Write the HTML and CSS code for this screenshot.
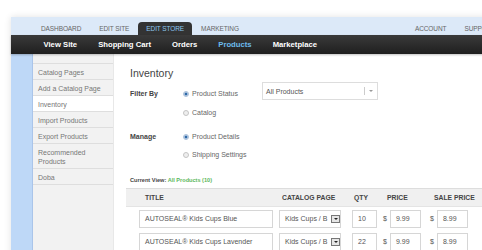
FILE: index.html
```html
<!DOCTYPE html>
<html lang="en">
<head>
  <meta charset="UTF-8">
  <title>Edit Store - Inventory</title>
  <link rel="stylesheet" href="styles.css">
</head>
<body>

  <div class="window">
    <div class="topbar">
      <a href="#" class="tab">Dashboard</a>
      <a href="#" class="tab">Edit Site</a>
      <a href="#" class="tab active">Edit Store</a>
      <a href="#" class="tab">Marketing</a>
      <div class="tab-right">
        <a href="#" class="tab">Account</a>
        <a href="#" class="tab">Support</a>
      </div>
    </div>

    <nav class="subnav">
      <a href="#">View Site</a>
      <a href="#">Shopping Cart</a>
      <a href="#">Orders</a>
      <a href="#" class="current">Products</a>
      <a href="#">Marketplace</a>
    </nav>

    <div class="main">
      <div class="strip"></div>

      <div class="sidebar">
        <div class="side-item blank"></div>
        <a href="#" class="side-item">Catalog Pages</a>
        <a href="#" class="side-item">Add a Catalog Page</a>
        <a href="#" class="side-item active">Inventory</a>
        <a href="#" class="side-item">Import Products</a>
        <a href="#" class="side-item">Export Products</a>
        <a href="#" class="side-item">Recommended Products</a>
        <a href="#" class="side-item">Doba</a>
      </div>

      <div class="content">
        <h2>Inventory</h2>

        <div class="form-row">
          <div class="label">Filter By</div>
          <div class="options">
            <div class="option"><span class="radio on"></span>Product Status</div>
            <div class="option"><span class="radio"></span>Catalog</div>
          </div>
          <div class="select">
            <span>All Products</span>
            <span class="select-arrow"></span>
          </div>
        </div>

        <div class="form-row manage">
          <div class="label">Manage</div>
          <div class="options">
            <div class="option"><span class="radio on"></span>Product Details</div>
            <div class="option"><span class="radio"></span>Shipping Settings</div>
          </div>
        </div>

        <div class="current-view">Current View: <span>All Products (10)</span></div>

        <div class="table">
          <div class="thead">
            <div class="th c-title">Title</div>
            <div class="th c-page">Catalog Page</div>
            <div class="th c-qty">Qty</div>
            <div class="th c-price">Price</div>
            <div class="th c-sale">Sale Price</div>
          </div>

          <div class="tr">
            <div class="td c-title"><div class="input title-input">AUTOSEAL® Kids Cups Blue</div></div>
            <div class="td c-page"><div class="mini-select"><span>Kids Cups / B</span><b></b></div></div>
            <div class="td c-qty"><div class="input qty-input">10</div></div>
            <div class="td c-price">$ <div class="input money-input">9.99</div></div>
            <div class="td c-sale">$ <div class="input money-input">8.99</div></div>
          </div>

          <div class="tr">
            <div class="td c-title"><div class="input title-input">AUTOSEAL® Kids Cups Lavender</div></div>
            <div class="td c-page"><div class="mini-select"><span>Kids Cups / B</span><b></b></div></div>
            <div class="td c-qty"><div class="input qty-input">22</div></div>
            <div class="td c-price">$ <div class="input money-input">9.99</div></div>
            <div class="td c-sale">$ <div class="input money-input">8.99</div></div>
          </div>
        </div>
      </div>
    </div>
  </div>

</body>
</html>
```

FILE: styles.css
```css
* {
  margin: 0;
  padding: 0;
  box-sizing: border-box;
}

body {
  background-color: #ffffff;
  font-family: "Liberation Sans", Arial, sans-serif;
  width: 482px;
  height: 250px;
  overflow: hidden;
}

a {
  text-decoration: none;
}

.window {
  margin: 17px 0 0 11px;
  width: 520px;
  height: 240px;
  box-shadow: 0 0 7px rgba(0, 0, 0, 0.12);
  display: flex;
  flex-direction: column;
}

/* top tabs */
.topbar {
  background-color: #dce9f8;
  height: 18px;
  display: flex;
  align-items: flex-end;
  padding-left: 21px;
  padding-right: 27px;
}

.tab {
  font-size: 6.5px;
  color: #666;
  text-transform: uppercase;
  padding: 0 9px;
  height: 13px;
  line-height: 13px;
  letter-spacing: -0.1px;
}

.tab.active {
  background-color: #333;
  color: #8cc6ee;
  border-radius: 4px 4px 0 0;
  padding: 0 8px;
}

.tab-right {
  margin-left: auto;
  display: flex;
}

/* dark nav */
.subnav {
  background: linear-gradient(#3a3a3a, #1f1f1f);
  height: 19px;
  display: flex;
  align-items: center;
  padding-left: 22px;
  box-shadow: 0 1px 2px rgba(0, 0, 0, 0.25);
  position: relative;
}

.subnav a {
  color: #fff;
  font-weight: bold;
  font-size: 7.7px;
  padding: 0 10.5px;
}

.subnav a.current {
  color: #6cbbec;
}

.main {
  flex: 1;
  display: flex;
}

.strip {
  width: 22px;
  background-color: #bed8f7;
  border-right: 1px solid #aac5ea;
}

/* sidebar */
.sidebar {
  width: 80px;
  background-color: #f2f2f2;
  display: flex;
  flex-direction: column;
}

.side-item {
  display: block;
  font-size: 7px;
  color: #777;
  padding: 4px 4px 2px 5px;
  min-height: 15px;
  line-height: 9px;
  border-bottom: 1px solid #dedede;
}

.side-item.blank {
  min-height: 10px;
  padding: 0;
}

.side-item.active {
  background-color: #fff;
  margin-right: -1px;
}

/* content */
.content {
  flex: 1;
  background-color: #fff;
  padding: 13px 0 0 14px;
  border-left: 1px solid #e8e8e8;
}

.content h2 {
  font-size: 10.5px;
  font-weight: normal;
  color: #444;
  margin-left: 2px;
  height: 16px;
}

.form-row {
  display: flex;
  margin-left: 2px;
  margin-top: 5px;
}

.form-row.manage {
  margin-top: 12px;
}

.label {
  width: 53px;
  font-size: 7px;
  font-weight: bold;
  color: #444;
  line-height: 12px;
}

.options {
  display: flex;
  flex-direction: column;
  gap: 6.5px;
  width: 79px;
}

.option {
  font-size: 7px;
  color: #666;
  line-height: 12px;
  display: flex;
  align-items: center;
}

.radio {
  width: 6px;
  height: 6px;
  border-radius: 50%;
  border: 1px solid #c4c4c4;
  background-color: #eee;
  margin-right: 3px;
}

.radio.on {
  background: radial-gradient(circle, #2f6aa8 45%, #c9d8ea 60%);
  border-color: #a9bfd9;
}

.select {
  width: 116px;
  height: 18px;
  margin-top: -6px;
  border: 1px solid #ddd;
  display: flex;
  align-items: center;
  justify-content: space-between;
  padding-left: 3px;
  font-size: 7px;
  color: #555;
}

.select-arrow {
  width: 13px;
  height: 8px;
  border-left: 1px solid #ccc;
  position: relative;
}

.select-arrow::after {
  content: "";
  position: absolute;
  left: 4px;
  top: 3px;
  border-left: 2px solid transparent;
  border-right: 2px solid transparent;
  border-top: 2px solid #999;
}

.current-view {
  font-size: 5.6px;
  font-weight: bold;
  color: #444;
  margin: 16px 0 0 2px;
}

.current-view span {
  color: #5cb85c;
}

/* table */
.table {
  margin-top: 5px;
  margin-left: -2px;
}

.thead, .tr {
  display: grid;
  grid-template-columns: 152px 72px 32px 47px 70px;
}

.thead {
  background-color: #f0f0f0;
  border-top: 1px solid #ddd;
  border-bottom: 1px solid #e4e4e4;
  height: 19px;
  align-items: center;
}

.th {
  font-size: 6.8px;
  font-weight: bold;
  color: #444;
  text-transform: uppercase;
}

.thead .c-title { padding-left: 19px; }
.thead .c-page { padding-left: 4px; }
.thead .c-qty { padding-left: 4px; }
.thead .c-price { padding-left: 5px; }
.thead .c-sale { padding-left: 5px; }

.tr {
  height: 23px;
  align-items: center;
}

.td {
  font-size: 7px;
  color: #555;
  display: flex;
  align-items: center;
}

.tr .c-title { padding-left: 13px; }
.tr .c-page { padding-left: 1px; }
.tr .c-qty { padding-left: 2px; }
.tr .c-price, .tr .c-sale { padding-left: 1px; gap: 2px; }

.input {
  height: 18px;
  border: 1px solid #d6d6d6;
  background-color: #fff;
  display: flex;
  align-items: center;
  padding-left: 5px;
  font-size: 7px;
  color: #555;
  white-space: nowrap;
  overflow: hidden;
}

.title-input { width: 134px; }
.qty-input { width: 25px; }
.money-input { width: 31px; margin-left: 1px; }

.mini-select {
  width: 62px;
  height: 18px;
  border: 1px solid #d6d6d6;
  display: flex;
  align-items: center;
  padding-left: 5px;
  position: relative;
}

.mini-select span {
  white-space: nowrap;
  width: 46px;
}

.mini-select b {
  width: 9px;
  height: 8px;
  background-color: #e6e6e6;
  border: 1px solid #777;
  position: relative;
}

.mini-select b::after {
  content: "";
  position: absolute;
  left: 2px;
  top: 2px;
  border-left: 2px solid transparent;
  border-right: 2px solid transparent;
  border-top: 2px solid #222;
}
```
